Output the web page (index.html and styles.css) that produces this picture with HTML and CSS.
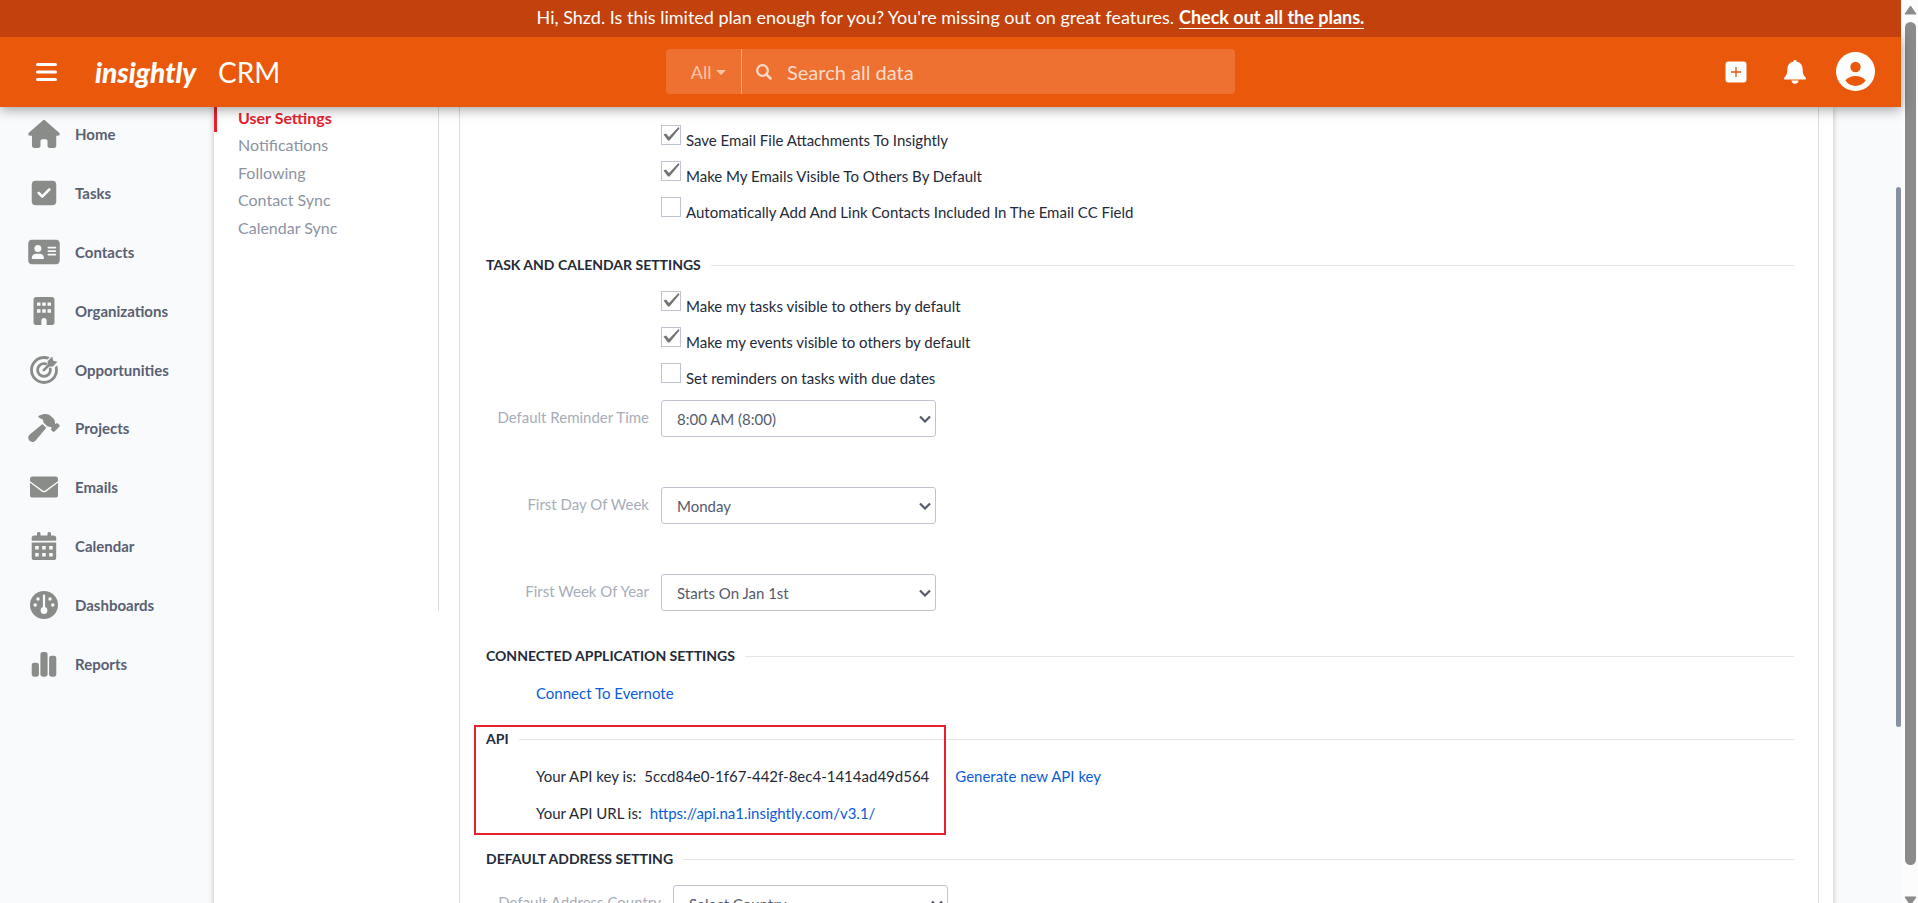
FILE: index.html
```html
<!DOCTYPE html>
<html lang="en">
	<head>
		<meta charset="UTF-8">
		<title>User Settings - Insightly CRM</title>
		<link rel="stylesheet" href="styles.css">
	</head>
	<body>
		<div class="app">
			<div class="banner">
				<span>Hi, Shzd. Is this limited plan enough for you? You're missing out on great features.</span>
				<a href="#plans">Check out all the plans.</a>
			</div>
			<header class="header">
				<div class="brand">
					<button type="button" class="menu" aria-label="Menu">
						<svg width="21" height="18" viewBox="0 0 21 18"><path d="M1.500 1.500h18M1.500 9h18M1.500 16.500h18" stroke="#fff" stroke-width="3" stroke-linecap="round"/></svg>
					</button>
					<a href="#home" class="logo">insightly</a>
					<span class="product">CRM</span>
				</div>
				<form class="search">
					<button type="button" class="scope">All <i class="caret"></i></button>
					<svg width="16" height="16" viewBox="0 0 16 16" fill="none" stroke="#fbdccb" stroke-linecap="round"><circle cx="6.500" cy="6.500" r="5.300" stroke-width="2.200"/><path d="M10.600 10.600l4 4" stroke-width="2.600"/></svg>
					<input type="text" placeholder="Search all data" aria-label="Search all data">
				</form>
				<div class="tools">
					<button type="button" aria-label="Add">
						<svg width="22" height="22" viewBox="0 0 22 22"><rect x="0.500" y="0.500" width="21" height="21" rx="3" fill="#fff"/><path d="M11 6v10M6 11h10" stroke="#ea580c" stroke-width="1.400"/></svg>
					</button>
					<button type="button" aria-label="Notifications">
						<svg width="22" height="24" viewBox="0 0 22 24" fill="#fff"><path d="M11 0C9.800 0 9.200 .8 9.200 1.800 5.600 2.500 3.600 5 3.400 8.500 3.300 13 2.800 15 .6 17.200 -.4 18.200 0 19.400 1.200 19.400H20.800C22 19.400 22.400 18.200 21.400 17.200 19.200 15 18.700 13 18.600 8.500 18.400 5 16.400 2.500 12.800 1.800 12.800 .8 12.200 0 11 0zM7.400 20.600h7.200C14.300 22.600 13 23.900 11 23.900S7.700 22.600 7.400 20.600z"/></svg>
					</button>
					<button type="button" aria-label="Account">
						<svg width="39" height="39" viewBox="0 0 39 39"><circle cx="19.500" cy="19.500" r="19.500" fill="#fff"/><circle cx="19.500" cy="15" r="5.200" fill="#ea580c"/><path d="M9.300 28.500C11.500 25.500 15.500 24 19.500 24s8 1.500 10.200 4.500C27.400 31.900 23.700 34 19.500 34S11.600 31.900 9.300 28.500z" fill="#ea580c"/></svg>
					</button>
				</div>
			</header>
			<div class="page">
				<nav class="sidebar">
					<a href="#home">
						<svg width="32" height="28" viewBox="0 0 576 512"><path d="M575.800 255.500c0 18-15 32.100-32 32.100h-32l.7 160.200c0 2.700-.2 5.400-.5 8.100V472c0 22.100-17.900 40-40 40h-80c-22.100 0-40-17.900-40-40v-88c0-17.700-14.300-32-32-32h-64c-17.700 0-32 14.300-32 32v88c0 22.100-17.900 40-40 40h-76c-22.100 0-40-17.900-40-40V287.600H32c-18 0-32-14-32-32.100 0-9 3-17 10-24L266.400 8c7-7 15-8 22-8s15 2 21 7l255.400 224.500c8 7 12 15 11 24z"/></svg>
						Home
					</a>
					<a href="#tasks">
						<svg width="32" height="28" viewBox="-64 0 576 512"><path d="M64 32C28.700 32 0 60.700 0 96v320c0 35.300 28.700 64 64 64h320c35.300 0 64-28.700 64-64V96c0-35.300-28.700-64-64-64H64zm273 177L209 337c-9.400 9.400-24.600 9.400-33.900 0l-64-64c-9.400-9.400-9.400-24.600 0-33.900s24.600-9.400 33.900 0l47 47L303 175c9.400-9.400 24.600-9.400 33.900 0s9.400 24.600 0 33.900z"/></svg>
						Tasks
					</a>
					<a href="#contacts">
						<svg width="32" height="28" viewBox="0 0 576 512"><path d="M64 32C28.700 32 0 60.700 0 96v320c0 35.300 28.700 64 64 64h448c35.300 0 64-28.700 64-64V96c0-35.300-28.700-64-64-64H64zm80 256h64c44.200 0 80 35.800 80 80 0 8.800-7.200 16-16 16H80c-8.800 0-16-7.200-16-16 0-44.200 35.800-80 80-80zm-32-96a64 64 0 1 1 128 0 64 64 0 1 1-128 0zm256-32h128c8.800 0 16 7.200 16 16s-7.200 16-16 16H368c-8.800 0-16-7.200-16-16s7.200-16 16-16zm0 64h128c8.800 0 16 7.200 16 16s-7.200 16-16 16H368c-8.800 0-16-7.200-16-16s7.200-16 16-16zm0 64h128c8.800 0 16 7.200 16 16s-7.200 16-16 16H368c-8.800 0-16-7.200-16-16s7.200-16 16-16z"/></svg>
						Contacts
					</a>
					<a href="#organizations">
						<svg width="32" height="28" viewBox="-96 0 576 512"><path d="M48 0C21.500 0 0 21.500 0 48v416c0 26.500 21.500 48 48 48h96v-80c0-26.500 21.500-48 48-48s48 21.500 48 48v80h96c26.500 0 48-21.500 48-48V48c0-26.500-21.500-48-48-48H48z"/><path class="cut" d="M64 100h64v60H64zM160 100h64v60h-64zM256 100h64v60h-64zM64 226h64v60H64zM160 226h64v60h-64zM256 226h64v60h-64z"/></svg>
						Organizations
					</a>
					<a href="#opportunities">
						<svg width="32" height="28" viewBox="-2 0 32 28"><g fill="none" stroke="#8a8c8a" stroke-width="2.800"><circle cx="14" cy="14" r="12.500"/><circle cx="14" cy="14" r="6.400"/></g><path class="cut" d="M12.500 13.500L17 8.500V4L21 0h4l1 3 3 1v4l-5 4-4.500-.5-4.500 5z"/><path d="M17.600 9.200V5.200L22.200.6l1.100 4.100L27.400 5.800 23 10.400h-4z"/><path d="M13.800 14.200L21 7" stroke="#8a8c8a" stroke-width="2.600" stroke-linecap="round"/></svg>
						Opportunities
					</a>
					<a href="#projects">
						<svg width="32" height="28" viewBox="0 0 576 512"><path d="M413.500 237.500c-28.200 4.800-58.200-3.600-80-25.400l-38.100-38.100C280.400 159 272 138.800 272 117.600v-12.100L192.300 62c-5.300-2.900-8.600-8.600-8.300-14.700s3.900-11.500 9.500-14l47.200-21C259.100 4.200 279 0 299.200 0h18.100c36.700 0 72 14 98.700 39.100l44.600 42c24.200 22.800 33.200 55.700 26.600 86L503 183l8-8c9.400-9.400 24.600-9.400 33.900 0l24 24c9.400 9.400 9.400 24.600 0 33.900l-88 88c-9.400 9.400-24.600 9.400-33.900 0l-24-24c-9.400-9.400-9.400-24.600 0-33.900l8-8-17.500-17.500zM27.400 377.100l233.500-194.500c3.500 4.900 7.500 9.600 11.800 14l38.100 38.100c6 6 12.400 11.200 19.200 15.700L134.900 484.600c-14.500 17.400-36 27.400-58.600 27.400C34.100 512 0 477.800 0 435.700c0-22.600 10.100-44.100 27.400-58.600z"/></svg>
						Projects
					</a>
					<a href="#emails">
						<svg width="32" height="28" viewBox="-2 0 32 28"><rect y="3.500" width="28" height="21" rx="2.600"/><path d="M-.5 8.500L12.400 18.100c1 .7 2.200 .7 3.200 0L28.500 8.500" fill="none" stroke="#f8fafc" stroke-width="1.400"/></svg>
						Emails
					</a>
					<a href="#calendar">
						<svg width="32" height="28" viewBox="-2 0 32 28"><path d="M7 1.700a1.700 1.700 0 0 1 3.500 0V3.500h7V1.700a1.700 1.700 0 0 1 3.500 0V3.500h2.600A2.600 2.600 0 0 1 26.200 6.100V8.700H1.700V6.100A2.600 2.600 0 0 1 4.300 3.500H7zM1.700 10.500H26.200V25.400A2.600 2.600 0 0 1 23.600 28H4.300A2.600 2.600 0 0 1 1.700 25.400z"/><path class="cut" d="M5.200 14h3.500v3.500H5.200zM12.200 14h3.500v3.500h-3.500zM19.200 14h3.500v3.500h-3.500zM5.200 21h3.500v3.500H5.200zM12.200 21h3.500v3.500h-3.500zM19.200 21h3.500v3.500h-3.500z"/></svg>
						Calendar
					</a>
					<a href="#dashboards">
						<svg width="32" height="28" viewBox="-2 0 32 28"><circle cx="14" cy="14" r="14"/><g class="cut"><circle cx="5.200" cy="14" r="1.700"/><circle cx="8" cy="8" r="1.700"/><circle cx="20" cy="8" r="1.700"/><circle cx="22.800" cy="14" r="1.700"/><circle cx="14" cy="19.500" r="3.400"/><rect x="12.900" y="3.500" width="2.200" height="15" rx="1.100"/></g></svg>
						Dashboards
					</a>
					<a href="#reports">
						<svg width="32" height="28" viewBox="-2 0 32 28"><rect x="1.700" y="12.700" width="7.200" height="14" rx="2.400"/><rect x="10.400" y="2" width="7.200" height="24.700" rx="2.400"/><rect x="19.100" y="5.700" width="7.200" height="21" rx="2.400"/></svg>
						Reports
					</a>
				</nav>
				<main class="card">
					<nav class="subnav">
						<a href="#user" class="active">User Settings</a>
						<a href="#notifications">Notifications</a>
						<a href="#following">Following</a>
						<a href="#contactsync">Contact Sync</a>
						<a href="#calendarsync">Calendar Sync</a>
					</nav>
					<form class="settings">
						<div class="checks">
							<label><input type="checkbox" checked>Save Email File Attachments To Insightly</label>
							<label><input type="checkbox" checked>Make My Emails Visible To Others By Default</label>
							<label><input type="checkbox">Automatically Add And Link Contacts Included In The Email CC Field</label>
						</div>
						<h3>TASK AND CALENDAR SETTINGS</h3>
						<div class="checks">
							<label><input type="checkbox" checked>Make my tasks visible to others by default</label>
							<label><input type="checkbox" checked>Make my events visible to others by default</label>
							<label><input type="checkbox">Set reminders on tasks with due dates</label>
						</div>
						<div class="fields">
							<div class="field">
								<label for="reminder">Default Reminder Time</label>
								<select id="reminder"><option>8:00 AM (8:00)</option></select>
							</div>
							<div class="field">
								<label for="firstday">First Day Of Week</label>
								<select id="firstday"><option>Monday</option></select>
							</div>
							<div class="field">
								<label for="firstweek">First Week Of Year</label>
								<select id="firstweek"><option>Starts On Jan 1st</option></select>
							</div>
						</div>
						<h3>CONNECTED APPLICATION SETTINGS</h3>
						<div class="lines">
							<p><a href="#evernote">Connect To Evernote</a></p>
						</div>
						<div class="api">
							<h3>API</h3>
							<div class="lines">
								<p><span>Your API key is:</span><span class="key">5ccd84e0-1f67-442f-8ec4-1414ad49d564</span><a href="#newkey">Generate new API key</a></p>
								<p><span>Your API URL is:</span><a href="#api">https://api.na1.insightly.com/v3.1/</a></p>
							</div>
							<div class="highlight"></div>
						</div>
						<h3>DEFAULT ADDRESS SETTING</h3>
						<div class="field address">
							<label for="country">Default Address Country</label>
							<select id="country"><option>Select Country</option></select>
						</div>
					</form>
				</main>
				<div class="innerbar"></div>
			</div>
		</div>
		<div class="scrollbar">
			<svg width="13" height="10" viewBox="0 0 13 10"><path d="M6.500 1L12 9H1z" fill="#8b8b8b" stroke="#8b8b8b" stroke-linejoin="round"/></svg>
			<div class="thumb"></div>
			<svg width="13" height="10" viewBox="0 0 13 10"><path d="M6.500 9L12 1H1z" fill="#8b8b8b" stroke="#8b8b8b" stroke-linejoin="round"/></svg>
		</div>
	</body>
</html>
```
FILE: styles.css
```css
* {
	box-sizing: border-box;
}
body {
	margin: 0;
	height: 100vh;
	display: flex;
	overflow: hidden;
	background-color: #f8fafc;
	color: #242a38;
	font-family: Lato, sans-serif;
	font-size: 15px;
}
a {
	color: #0b5cd7;
	text-decoration: none;
}
button {
	padding: 0;
	border: 0;
	background: none;
	font-family: inherit;
	cursor: pointer;
}
svg {
	display: block;
	flex: none;
}
.app {
	flex: 1;
	min-width: 0;
	display: flex;
	flex-direction: column;
}
/* top bars */
.banner {
	flex: none;
	z-index: 3;
	height: 37px;
	padding-bottom: 2px;
	display: flex;
	justify-content: center;
	align-items: center;
	gap: 5px;
	background-color: #c2410c;
	color: #fff;
	font-size: 18px;
	line-height: 21px;
}
.banner a {
	color: #fff;
	font-weight: bold;
	border-bottom: 1px solid #fff;
}
.header {
	flex: none;
	z-index: 2;
	height: 70px;
	padding: 0 26px 1px;
	display: grid;
	grid-template-columns: 1fr 569px 1fr;
	align-items: center;
	background-color: #ea580c;
	color: #fff;
	box-shadow: 0 2px 12px rgba(0, 0, 0, 0.4);
}
.brand {
	padding-left: 10px;
	display: grid;
	grid-template-columns: 59px 123px auto;
	align-items: center;
}
.menu {
	width: 21px;
}
.logo {
	color: #fff;
	font-size: 28px;
	font-weight: 900;
	font-style: italic;
}
.product {
	font-size: 28px;
}
.search {
	height: 45px;
	display: flex;
	align-items: center;
	border-radius: 4px;
	background-color: #ee7132;
}
.scope {
	width: 76px;
	height: 45px;
	margin-right: 14px;
	padding-left: 10px;
	border-right: 1px solid #f7a67d;
	color: #fac5aa;
	font-size: 18px;
}
.caret {
	display: inline-block;
	border: 5px solid transparent;
	border-top-color: #fac5aa;
	border-bottom: 0;
	vertical-align: 4px;
}
.search input {
	flex: 1;
	min-width: 0;
	padding: 0 15px;
	border: 0;
	outline: 0;
	background: none;
	color: #fff;
	font-family: inherit;
	font-size: 20px;
}
.search input::placeholder {
	color: #fbdccb;
}
.tools {
	display: flex;
	justify-content: flex-end;
	align-items: center;
}
.tools button {
	margin-left: 37px;
}
.tools button:last-child {
	margin-left: 30px;
}
/* main area */
.page {
	flex: 1;
	min-height: 0;
	display: flex;
}
.sidebar {
	flex: none;
	width: 214px;
	height: 588px;
	margin-top: -2px;
	padding-left: 28px;
	display: grid;
	grid-auto-rows: 1fr;
}
.sidebar a {
	display: flex;
	align-items: center;
	gap: 15px;
	color: #5a6072;
	font-weight: bold;
}
.sidebar svg {
	fill: #8a8c8a;
}
.sidebar .cut {
	fill: #f8fafc;
}
.card {
	flex: 1;
	min-width: 0;
	height: 840px;
	padding-right: 14px;
	display: flex;
	align-items: flex-start;
	gap: 20px;
	background-color: #fff;
	box-shadow: 0 0 6px rgba(0, 0, 0, 0.25);
}
.subnav {
	flex: none;
	width: 225px;
	height: 506px;
	margin-top: -2px;
	padding-bottom: 369px;
	display: grid;
	grid-auto-rows: 1fr;
	border-right: 1px solid #dcdde2;
	font-size: 16px;
}
.subnav a {
	padding-left: 24px;
	line-height: 26px;
	color: #8b93a3;
}
.subnav .active {
	padding-left: 21px;
	border-left: 3px solid #e5212d;
	color: #e5212d;
	font-weight: bold;
}
.settings {
	flex: 1;
	height: 840px;
	padding: 15px 24px 0 26px;
	border: solid #dcdde2;
	border-width: 0 1px;
}
h3 {
	height: 20px;
	margin: 22px 0 13px;
	display: flex;
	align-items: center;
	gap: 10px;
	font-size: 14px;
	line-height: 20px;
}
h3::after {
	content: "";
	flex: 1;
	border-top: 1px solid #e5e6e9;
}
.checks {
	padding: 0 0 3px 175px;
}
.checks label {
	height: 36px;
	display: flex;
	gap: 5px;
	line-height: 36px;
}
.checks input {
	appearance: none;
	flex: none;
	width: 20px;
	height: 20px;
	margin: 3px 0 0;
	border: 1px solid #c0c4d0;
}
.checks input:checked {
	background: url("data:image/svg+xml,%3Csvg xmlns='http://www.w3.org/2000/svg' viewBox='0 0 18 18'%3E%3Cpath d='M1.500 8.500l2.500-1 3 3.500L16.500 1 17.500 2.500 7.500 14.500H6z' fill='%23737373'/%3E%3C/svg%3E") no-repeat;
}
.fields {
	padding: 1px 0 13px;
	display: grid;
	gap: 50px;
}
.field {
	display: grid;
	grid-template-columns: 163px 275px;
	gap: 12px;
}
.field label {
	line-height: 34px;
	color: #a7adba;
	text-align: right;
	white-space: nowrap;
}
.field select {
	appearance: none;
	height: 37px;
	padding: 0 30px 0 15px;
	border: 1px solid #c0c4d0;
	border-radius: 3px;
	background: #fff url("data:image/svg+xml,%3Csvg xmlns='http://www.w3.org/2000/svg' width='12' height='8' viewBox='0 0 12 8'%3E%3Cpath d='M1 1.500l5 5 5-5' fill='none' stroke='%23555b6b' stroke-width='2.200'/%3E%3C/svg%3E") no-repeat right 4px center;
	color: #555b6b;
	font-family: inherit;
	font-size: 15px;
}
.address {
	margin-top: 16px;
	grid-template-columns: 175px 275px;
}
.lines {
	padding-left: 50px;
	display: grid;
	gap: 9px;
}
.lines p {
	margin: 0;
	display: flex;
	gap: 8px;
	line-height: 28px;
}
.lines .key {
	margin-right: 18px;
}
.api {
	position: relative;
}
.highlight {
	position: absolute;
	top: -4px;
	left: -12px;
	width: 472px;
	height: 110px;
	border: 2px solid #e5212d;
	pointer-events: none;
}
/* scrollbars */
.innerbar {
	flex: none;
	width: 5px;
	height: 540px;
	margin: 80px 0 0 63px;
	border-radius: 3px;
	background-color: #8791a0;
}
.scrollbar {
	flex: none;
	width: 17px;
	height: calc(100vh + 3px);
	padding: 5px 0 0 3px;
	display: flex;
	flex-direction: column;
	background-color: #fcfcfc;
}
.thumb {
	flex: 1;
	width: 11px;
	margin: 7px 0 31px 1px;
	border-radius: 6px;
	background-color: #8b8b8b;
}
```
